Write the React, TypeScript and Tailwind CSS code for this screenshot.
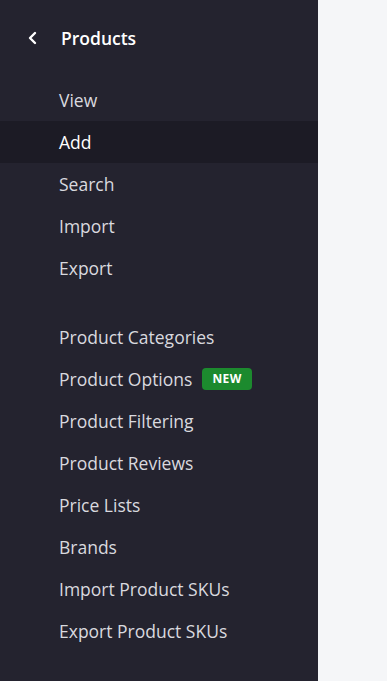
import React from "react";

const group1 = ["View", "Add", "Search", "Import", "Export"];
const group2 = [
  "Product Categories",
  "Product Options",
  "Product Filtering",
  "Product Reviews",
  "Price Lists",
  "Brands",
  "Import Product SKUs",
  "Export Product SKUs",
];

function Row({ label, active }: { label: string; active?: boolean }) {
  return (
    <div
      className={
        "h-[42px] flex items-center pl-[59px] text-[17.5px] " +
        (active ? "bg-[#1c1b25] text-white" : "text-[#d9d9df]")
      }
    >
      <span>{label}</span>
      {label === "Product Options" && (
        <span className="ml-[10px] h-[22px] px-[10px] rounded-[4px] bg-[#1c8a2e] text-white text-[12px] font-bold flex items-center tracking-[0.4px]">
          NEW
        </span>
      )}
    </div>
  );
}

export default function App() {
  return (
    <div
      className="flex w-[387px] h-[681px] bg-[#f5f6f8]"
      style={{ fontFamily: '"Open Sans", "Noto Sans", sans-serif' }}
    >
      <div className="w-[318px] h-full bg-[#24232f] flex flex-col">
        <div className="h-[79px] flex items-start pt-[26px]">
          <div className="flex items-center h-[24px]">
            <svg
              className="ml-[27px]"
              width="12"
              height="14"
              viewBox="0 0 12 14"
              fill="none"
            >
              <path
                d="M8 2 L3 7 L8 12"
                stroke="white"
                strokeWidth="2.4"
                strokeLinecap="round"
                strokeLinejoin="round"
              />
            </svg>
            <span className="ml-[22px] text-white text-[17.5px] font-semibold">
              Products
            </span>
          </div>
        </div>
        {group1.map((l) => (
          <Row key={l} label={l} active={l === "Add"} />
        ))}
        <div className="h-[27px]" />
        {group2.map((l) => (
          <Row key={l} label={l} />
        ))}
      </div>
      <div className="flex-1" />
    </div>
  );
}
